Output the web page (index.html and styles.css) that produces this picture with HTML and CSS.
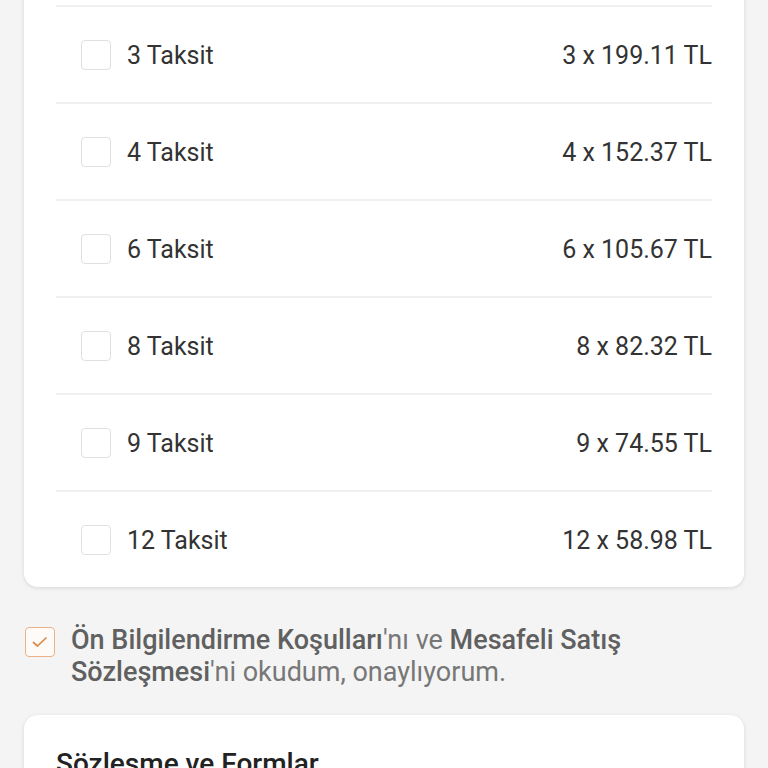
FILE: index.html
```html
<!DOCTYPE html>
<html lang="tr">
<head>
<meta charset="utf-8">
<link rel="stylesheet" href="styles.css">
</head>
<body>
<div class="page">
  <div class="card installments">
    <div class="row"><div class="left"><span class="box"></span><span class="label">3 Taksit</span></div><span class="price">3 x 199.11 TL</span></div>
    <div class="row"><div class="left"><span class="box"></span><span class="label">4 Taksit</span></div><span class="price">4 x 152.37 TL</span></div>
    <div class="row"><div class="left"><span class="box"></span><span class="label">6 Taksit</span></div><span class="price">6 x 105.67 TL</span></div>
    <div class="row"><div class="left"><span class="box"></span><span class="label">8 Taksit</span></div><span class="price">8 x 82.32 TL</span></div>
    <div class="row"><div class="left"><span class="box"></span><span class="label">9 Taksit</span></div><span class="price">9 x 74.55 TL</span></div>
    <div class="row"><div class="left"><span class="box"></span><span class="label">12 Taksit</span></div><span class="price">12 x 58.98 TL</span></div>
  </div>

  <div class="terms">
    <span class="box checked">
      <svg width="20" height="20" viewBox="0 0 20 20"><path d="M3.5 10.5 L7.5 14 L16 6" fill="none" stroke="#d98a4a" stroke-width="1.7" stroke-linecap="round" stroke-linejoin="round"/></svg>
    </span>
    <p class="terms-text"><b>Ön Bilgilendirme Koşulları</b>'nı ve <b>Mesafeli Satış Sözleşmesi</b>'ni okudum, onaylıyorum.</p>
  </div>

  <div class="card forms">
    <h2 class="title">Sözleşme ve Formlar</h2>
  </div>
</div>
</body>
</html>
```
FILE: styles.css
```css
html, body {
  margin: 0;
  padding: 0;
  background: #f4f4f4;
  font-family: Roboto, "Noto Sans", Arial, sans-serif;
  overflow: hidden;
  height: 768px;
}
.page {
  padding: 0 24px;
}
.card {
  background: #fff;
  border-radius: 14px;
  box-shadow: 0 1px 4px rgba(0,0,0,0.12);
  padding: 0 32px;
}
.installments {
  margin-top: -20px;
  padding-top: 25px;
}
.row {
  display: flex;
  align-items: center;
  justify-content: space-between;
  height: 95px;
  border-top: 2px solid #efefef;
}
.left {
  display: flex;
  align-items: center;
  gap: 16px;
  padding-left: 25px;
}
.box {
  display: flex;
  align-items: center;
  justify-content: center;
  width: 28px;
  height: 28px;
  border: 1px solid #e0e0e0;
  border-radius: 4px;
  background: #fff;
  flex-shrink: 0;
}
.label, .price {
  font-size: 25px;
  color: #333;
  line-height: 30px;
  position: relative;
  top: 1px;
}
.terms {
  display: flex;
  align-items: flex-start;
  gap: 16px;
  margin-top: 37px;
  padding-left: 1px;
}
.box.checked {
  margin-top: 3px;
  border-color: #eab286;
  background: #fdfaf7;
}
.terms-text {
  margin: 0;
  font-size: 27px;
  line-height: 32px;
  color: #777;
}
.terms-text b {
  font-weight: 500;
  color: #606060;
}
.forms {
  margin-top: 27px;
  padding-top: 33px;
  height: 200px;
}
.title {
  margin: 0;
  font-size: 28px;
  line-height: 32px;
  font-weight: 500;
  color: #222;
}
```
